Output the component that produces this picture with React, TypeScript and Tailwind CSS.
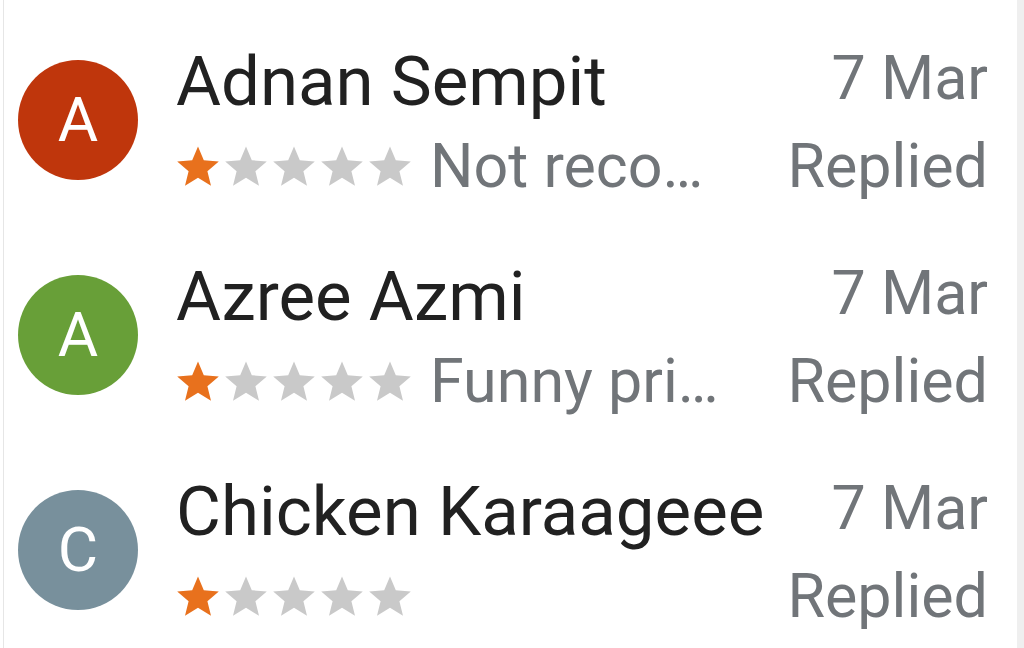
import React from 'react';

interface Review {
    name: string;
    initial: string;
    color: string;
    snippet: string;
    date: string;
    status: string;
}

const reviews: Review[] = [
    { name: 'Adnan Sempit', initial: 'A', color: 'bg-[#bf360c]', snippet: 'Not reco…', date: '7 Mar', status: 'Replied' },
    { name: 'Azree Azmi', initial: 'A', color: 'bg-[#689f38]', snippet: 'Funny pri…', date: '7 Mar', status: 'Replied' },
    { name: 'Chicken Karaageee', initial: 'C', color: 'bg-[#78909c]', snippet: '', date: '7 Mar', status: 'Replied' },
];

const Star = ({ filled }: { filled: boolean }) => (
    <svg viewBox="0 0 24 24" className="w-[48px] h-[48px]">
        <path
            d="M12 2.2l2.9 6.9 7.5.6-5.7 4.9 1.8 7.3L12 17.9l-6.5 4 1.8-7.3L1.6 9.7l7.5-.6z"
            fill={filled ? '#e8711d' : '#c9c9c9'}
        />
    </svg>
);

const ReviewRow = ({ review }: { review: Review }) => (
    <div className="flex items-start h-[215px] pt-[42px] pl-[14px] pr-[29px]">
        <div
            className={`${review.color} mt-[18px] w-[120px] h-[120px] rounded-full flex items-center justify-center text-white text-[62px] leading-none shrink-0`}
        >
            {review.initial}
        </div>
        <div className="flex-1 ml-[38px] min-w-0">
            <div className="flex items-start justify-between">
                <span className="text-[#212121] text-[69px] leading-[80px] whitespace-nowrap">{review.name}</span>
                <span className="text-[#717579] text-[61px] leading-[72px] whitespace-nowrap">{review.date}</span>
            </div>
            <div className="flex items-center justify-between h-[88px]">
                <div className="flex items-center">
                    <div className="flex items-center -ml-[2px]">
                        {[0, 1, 2, 3, 4].map((i) => (
                            <Star key={i} filled={i === 0} />
                        ))}
                    </div>
                    {review.snippet && (
                        <span className="ml-[16px] text-[#717579] text-[61px] leading-[88px] whitespace-nowrap">
                            {review.snippet}
                        </span>
                    )}
                </div>
                <span className="text-[#717579] text-[61px] leading-[88px] whitespace-nowrap">{review.status}</span>
            </div>
        </div>
    </div>
);

export default function App() {
    return (
        <div className="w-[1024px] h-[648px] overflow-hidden bg-white flex" style={{ fontFamily: 'Roboto, "Noto Sans", sans-serif' }}>
            <div className="w-[3px] bg-white" />
            <div className="w-px bg-[#e6e6e6]" />
            <div className="flex-1 min-w-0">
                {reviews.map((r) => (
                    <ReviewRow key={r.name} review={r} />
                ))}
            </div>
            <div className="w-[7px] bg-[#efefef]" />
        </div>
    );
}
